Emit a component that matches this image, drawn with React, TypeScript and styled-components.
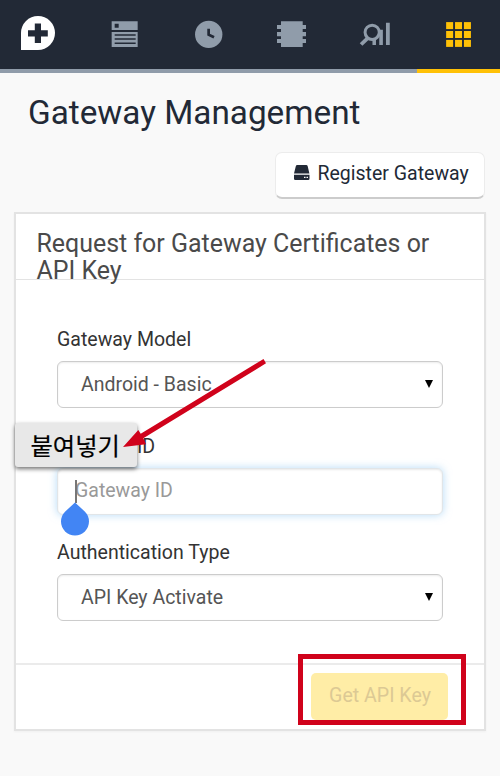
import React from 'react';
import styled, { createGlobalStyle, css } from 'styled-components';

const Global = createGlobalStyle`
  *, *::before, *::after { box-sizing: border-box; }
  body { margin: 0; background: #f9f9f9; font-family: Roboto, "Noto Sans CJK KR", sans-serif; }
  h1, h2 { margin: 0; font-weight: 400; }
`;

const Page = styled.div`
  position: relative;
  width: 500px;
  height: 776px;
  overflow: hidden;
  background: #f9f9f9;
`;

const Nav = styled.nav`
  display: grid;
  grid-template-columns: repeat(6, 1fr);
  height: 73px;
  background: #222936;
`;

const Tab = styled.a<{ $active?: boolean; $brand?: boolean }>`
  display: flex;
  height: 73px;
  border-bottom: 4px solid ${p => (p.$active ? '#ffc107' : '#909caa')};
  color: ${p => (p.$active ? '#ffc107' : p.$brand ? '#ffffff' : '#909caa')};
  svg { display: block; width: 83.33px; height: 69px; }
`;

const Title = styled.h1`
  height: 78.5px;
  padding: 20px 0 0 28px;
  color: #222936;
  font-size: 33.3px;
  line-height: 40px;
  white-space: nowrap;
`;

const Actions = styled.div`
  display: flex;
  justify-content: flex-end;
  padding-right: 15px;
`;

const RegisterButton = styled.button`
  display: flex;
  align-items: center;
  gap: 6.5px;
  width: 210px;
  height: 47.5px;
  padding: 0 0 1px 17px;
  border: 1px solid #ececec;
  border-bottom: 2px solid #cccccc;
  border-radius: 7px;
  background: #fff;
  color: #222936;
  font: 400 19.5px/24px Roboto, sans-serif;
  white-space: nowrap;
  svg { flex: none; width: 18px; height: 17px; margin-top: -4px; }
`;

const Panel = styled.section`
  width: 472px;
  height: 519px;
  margin: 13px 0 0 14px;
  border: 2px solid #e3e3e3;
  background: #fff;
  box-shadow: 0 1px 2px rgba(0, 0, 0, 0.04);
`;

const PanelHeader = styled.header`
  height: 66px;
  padding: 17px 20.5px 0;
  border-bottom: 1px solid #e3e3e3;
`;

const PanelTitle = styled.h2`
  color: #4a4a4a;
  font-size: 24.95px;
  line-height: 26.5px;
`;

const Form = styled.form`
  display: flex;
  flex-direction: column;
  gap: 24px;
  height: 383px;
  padding: 46px 41px 0;
`;

const Field = styled.label`
  display: block;
  height: 82.6px;
`;

const Label = styled.span`
  display: block;
  height: 35px;
  padding-top: 1px;
  color: #333;
  font-size: 19.55px;
  line-height: 25px;
  white-space: nowrap;
`;

const control = css`
  display: flex;
  align-items: center;
  justify-content: space-between;
  width: 386px;
  height: 47px;
  padding: 0 9px 0 23px;
  border-radius: 6px;
  background: #fff;
  font: 400 19.5px/24px Roboto, sans-serif;
  white-space: nowrap;
`;

const Select = styled.div`
  ${control}
  border: 1.5px solid #ccc;
  color: #555;
  box-shadow: inset 0 1px 2px rgba(0, 0, 0, 0.08);
  svg { width: 8px; height: 8px; margin-top: -1px; }
`;

const TextInput = styled.input`
  ${control}
  padding: 0 9px 1px 17px;
  border: 1px solid #e1e5e8;
  outline: none;
  box-shadow: inset 0 1px 2px rgba(0, 0, 0, 0.09), 0 0 9px rgba(120, 188, 240, 0.55);
  &::placeholder { color: #999; opacity: 1; }
`;

const PanelFooter = styled.footer`
  display: flex;
  justify-content: flex-end;
  height: 66px;
  padding: 8px 36px 0 0;
  border-top: 2px solid #ebebeb;
`;

const SubmitButton = styled.button`
  width: 137px;
  height: 47px;
  padding: 0 0 1px 1px;
  border: 0;
  border-radius: 5px;
  background: #ffeda6;
  color: #dcc994;
  font: 400 19.6px/24px Roboto, sans-serif;
  white-space: nowrap;
`;

const Caret = styled.span`
  position: absolute;
  left: 75px;
  top: 480px;
  width: 1.5px;
  height: 23px;
  background: #777;
`;

const Handle = styled.svg`
  position: absolute;
  left: 61px;
  top: 502px;
  width: 28px;
  height: 34px;
`;

const PasteMenu = styled.div`
  position: absolute;
  left: 14.5px;
  top: 423px;
  width: 122px;
  height: 44px;
  padding-left: 16px;
  border-radius: 3px;
  background: #e8e8e8;
  box-shadow: 0 2px 4px rgba(0, 0, 0, 0.55);
  color: #000;
  font: 400 24.3px/44px "Noto Sans CJK KR", sans-serif;
  -webkit-text-stroke: 0.2px #000;
  white-space: nowrap;
`;

const Highlight = styled.div`
  position: absolute;
  left: 298px;
  top: 654px;
  width: 168px;
  height: 71px;
  border: 5px solid #d0021b;
`;

const Arrow = styled.svg`
  position: absolute;
  left: 120px;
  top: 355px;
  width: 150px;
  height: 96px;
`;

const BG = '#222936';

const BrandIcon = () => (
  <svg viewBox="0 0 83.33 69">
    <path fill="currentColor" d="M21 50V33a17 17 0 1 1 17 17z" />
    <path fill={BG} d="M34.8 23.5h6.2v6.7h6.8v6.2H41v6.7h-6.2v-6.7H28v-6.2h6.8z" />
  </svg>
);

const ListIcon = () => (
  <svg viewBox="83.33 0 83.33 69">
    <path fill="currentColor" d="M112 21.3h26V30h-26zM112 32h26v15h-26z" />
    <path fill={BG} d="M115 23.7h4v4h-4zM115 34.2h21v1.5h-21zM115 38.3h21v1.5h-21zM115 42.6h21v1.5h-21z" />
  </svg>
);

const ClockIcon = () => (
  <svg viewBox="166.67 0 83.33 69">
    <circle cx="208.4" cy="34.4" r="13.7" fill="currentColor" />
    <path d="M208.3 28.8v5.8l5.4 2.7" fill="none" stroke={BG} strokeWidth="2.7" />
  </svg>
);

const ChipIcon = () => (
  <svg viewBox="250 0 83.33 69">
    <path
      fill="currentColor"
      d="M281 21.3h21.7V25h3.3v4.1h-3.3v2.8h3.3v4.3h-3.3V39h3.3v4.1h-3.3V47H281v-3.9h-4V39h4v-2.8h-4v-4.3h4v-2.8h-4V25h4z"
    />
  </svg>
);

const AnalyticsIcon = () => (
  <svg viewBox="333.33 0 83.33 69">
    <path
      fill="currentColor"
      d="M386.3 22.8h3.8V45h-3.8zM379.6 29.8h3.6V45h-3.6zM372.8 39h3.5v6h-3.5z"
    />
    <path d="M367.8 38.3l-6.4 6.2" fill="none" stroke="currentColor" strokeWidth="3.8" />
    <circle cx="372.5" cy="32.3" r="7.1" fill="none" stroke="currentColor" strokeWidth="3" />
  </svg>
);

const GridIcon = () => (
  <svg viewBox="416.67 0 83.33 69">
    {[0, 1, 2].flatMap(r =>
      [0, 1, 2].map(c => (
        <rect key={`${r}${c}`} x={445.8 + c * 8.9} y={22.1 + r * 8.9} width="7" height="7" fill="currentColor" />
      )),
    )}
  </svg>
);

const DriveIcon = () => (
  <svg viewBox="0 0 18 17">
    <path fill="#222936" d="M4.3 1h8.9q1.2 0 1.5 1.2L16.4 9.5H1L2.8 2.2Q3.1 1 4.3 1zM1 10.800h15.5v3.9q0 1.3-1.3 1.3H2.3Q1 16 1 14.700z" />
    <path fill="#fff" d="M11 12.7h1.5v1.4H11zM13.500 12.700h1.500v1.400h-1.500z" />
  </svg>
);

const DownTriangle = () => (
  <svg viewBox="0 0 8 8">
    <path d="M0 0h8L4 8z" fill="#000" />
  </svg>
);

export default function App() {
  return (
    <Page>
      <Global />
      <Nav>
        <Tab $brand><BrandIcon /></Tab>
        <Tab><ListIcon /></Tab>
        <Tab><ClockIcon /></Tab>
        <Tab><ChipIcon /></Tab>
        <Tab><AnalyticsIcon /></Tab>
        <Tab $active><GridIcon /></Tab>
      </Nav>
      <Title>Gateway Management</Title>
      <Actions>
        <RegisterButton><DriveIcon />Register Gateway</RegisterButton>
      </Actions>
      <Panel>
        <PanelHeader>
          <PanelTitle>Request for Gateway Certificates or API Key</PanelTitle>
        </PanelHeader>
        <Form>
          <Field>
            <Label>Gateway Model</Label>
            <Select>Android - Basic<DownTriangle /></Select>
          </Field>
          <Field>
            <Label>Gateway ID</Label>
            <TextInput placeholder="Gateway ID" />
          </Field>
          <Field>
            <Label>Authentication Type</Label>
            <Select>API Key Activate<DownTriangle /></Select>
          </Field>
        </Form>
        <PanelFooter>
          <SubmitButton type="button">Get API Key</SubmitButton>
        </PanelFooter>
      </Panel>
      <Caret />
      <Handle viewBox="0 0 28 34">
        <path fill="#4285f4" d="M14 0.500L24 9.700A14 14 0 1 1 4 9.700z" />
      </Handle>
      <PasteMenu>붙여넣기</PasteMenu>
      <Arrow viewBox="120 355 150 96">
        <path fill="#d0021b" d="M123 447L138.300 430L140.700 433.800L263.500 359L266 363.300L143.300 438.300L146 444.300z" />
      </Arrow>
      <Highlight />
    </Page>
  );
}
